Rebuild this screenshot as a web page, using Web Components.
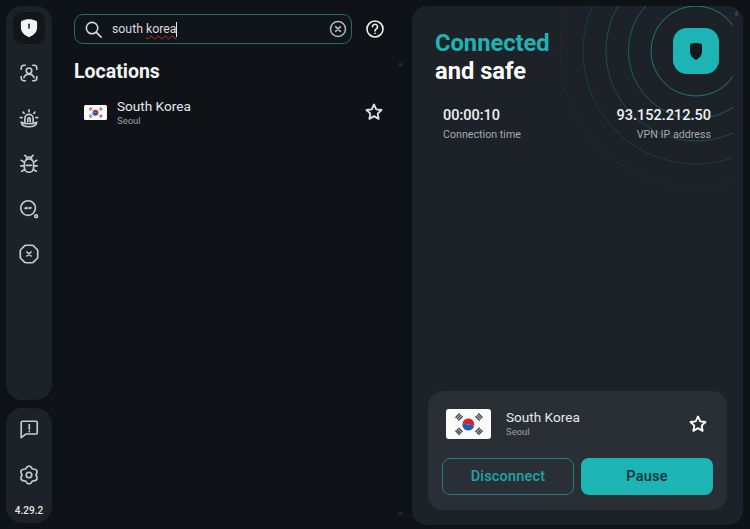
<!DOCTYPE html>
<html>
<head>
<meta charset="utf-8">
<title>VPN</title>
<style>
	html, body { margin: 0; height: 100%; background: #0f1318; overflow: hidden; }
	body { font-family: Roboto, "Liberation Sans", sans-serif; color: #fff; }
	vpn-app { width: 750px; height: 529px; }
</style>
</head>
<body>
<vpn-app></vpn-app>
<script>
(function(){
	'use strict';

	const ICONS = {
		shield: '<path d="M12 2.500c2.500 0 6 .8 7.500 1.500.8.400 1.300 1 1.300 2v5.500c0 5-3.500 8.500-8.800 10.500C6.700 20 3.200 16.500 3.200 11.500V6c0-1 .5-1.600 1.300-2C6 3.300 9.500 2.500 12 2.500z" fill="#f2f3f4" stroke="none"/><rect x="11.100" y="7" width="1.800" height="6" rx=".9" fill="#20262c" stroke="none"/>',
		face: '<path d="M3.500 8V6.500a3 3 0 0 1 3-3H8M16 3.500h1.500a3 3 0 0 1 3 3V8M20.500 16v1.500a3 3 0 0 1-3 3H16M8 20.500H6.500a3 3 0 0 1-3-3V16"/><circle cx="12" cy="9.500" r="3"/><path d="M6.500 17c1-2.700 3-3.700 5.500-3.700s4.500 1 5.500 3.700"/>',
		alarm: '<path d="M7.500 15.500v-4a4.500 4.500 0 0 1 9 0v4"/><path d="M10.700 15v-3a1.300 1.300 0 0 1 2.600 0v3"/><path d="M3.500 15.500c.5 3.500 3 5 8.500 5s8-1.500 8.500-5c-2 1.200-4.500 1.700-8.500 1.700s-6.500-.5-8.500-1.700z"/><path d="M12 2v2M5.500 4.500l1.300 1.500M18.500 4.500L17.200 6M2.500 10.500h2M19.500 10.500h2"/>',
		bug: '<rect x="7" y="6.500" width="10" height="14.500" rx="5"/><path d="M9 7.500a3 3 0 0 1 6 0M9.500 13.500h5M7 10L3.500 8M17 10l3.500-2M7 14H3M17 14h4M7.500 18l-3.500 2M16.500 18l3.500 2M9 4L7.500 2.500M15 4l1.500-1.500"/>',
		search: '<circle cx="11" cy="11" r="8"/><path d="M7.800 11.500c.8-1.300 1.600-1.300 2.200 0M12 10.500c.6 1.300 1.400 1.300 2.200 0"/><circle cx="19.800" cy="19.800" r="1.500"/>',
		blocked: '<path d="M8.500 2.500h7c.6 0 1 .2 1.400.6l4 4c.4.400.6.800.6 1.400v7c0 .6-.2 1-.6 1.400l-4 4c-.4.400-.8.600-1.400.6h-7c-.6 0-1-.2-1.400-.6l-4-4c-.4-.4-.6-.8-.6-1.400v-7c0-.6.2-1 .6-1.400l4-4c.4-.4.800-.6 1.400-.6z"/><path d="M9.800 9.800l4.400 4.400M14.200 9.800l-4.400 4.400"/>',
		feedback: '<path d="M3.500 5a1.500 1.500 0 0 1 1.500-1.500h14.500a1.500 1.500 0 0 1 1.500 1.500v11a1.500 1.500 0 0 1-1.500 1.500H8.500L3.500 21.500z"/><path d="M12.300 7.200v5M12.300 14.500v.5"/>',
		gear: '<path d="M8.200 5.420Q12-1 15.800 5.420 23.260 5.500 19.600 12 23.260 18.500 15.800 18.580 12 25 8.200 18.580.74 18.500 4.400 12 .74 5.500 8.200 5.420z"/><circle cx="12" cy="12" r="3"/>'
	};

	const FLAG = `<svg viewBox="0 0 45 30" width="100%" height="100%" preserveAspectRatio="none" aria-hidden="true">
		<rect width="45" height="30" rx="3" fill="#fbfbfb"/>
		<path d="M16.300 15.500a6 6 0 0 1 12 0z" fill="#d8232f" transform="rotate(10 22.300 15.500)"/>
		<path d="M16.300 15.500a6 6 0 0 0 12 0z" fill="#1f5fae" transform="rotate(10 22.300 15.500)"/>
		<g stroke="#3a3d40" stroke-width="1.400" fill="none">
			<path d="M-3 -2H3M-3 0H3M-3 2H3" transform="translate(13 8) rotate(-45)"/>
			<path d="M-3 -2H3M-3 0H3M-3 2H3" transform="translate(33 8) rotate(45)"/>
			<path d="M-3 -2H3M-3 0H3M-3 2H3" transform="translate(13 22.300) rotate(45)"/>
			<path d="M-3 -2H3M-3 0H3M-3 2H3" transform="translate(33 22.300) rotate(-45)"/>
		</g>
	</svg>`;

	const STAR = `<svg viewBox="0 0 24 24" width="100%" height="100%" fill="none" stroke="currentColor" stroke-width="2.200" stroke-linejoin="round" aria-hidden="true"><path d="M12 3l2.700 5.800 6.300.8-4.600 4.300 1.200 6.300L12 17l-5.600 3.200 1.200-6.300L3 9.600l6.300-.8z"/></svg>`;

	function define(name, css, html, setup){
		const tmpl = document.createElement('template');
		tmpl.innerHTML = `<style>${css}</style>${html}`;
		window.customElements.define(name, class extends HTMLElement {
			constructor(){
				super();
				this.attachShadow({mode: 'open'}).appendChild(tmpl.content.cloneNode(true));
			}
			connectedCallback(){
				if(setup) setup(this, this.shadowRoot);
			}
		});
	}

	define('nav-icon', `
		:host { display: flex; width: 32px; height: 32px; align-items: center; justify-content: center; border-radius: 9px; color: #c9ccce; }
		:host([active]) { background: #13171c; }
		svg { width: 22px; height: 22px; fill: none; stroke: currentColor; stroke-width: 1.800; stroke-linecap: round; stroke-linejoin: round; }
	`, `<svg viewBox="0 0 24 24"></svg>`, (el, root) => {
		root.querySelector('svg').innerHTML = ICONS[el.getAttribute('name')];
	});

	define('side-bar', `
		:host { display: flex; flex-direction: column; gap: 8px; width: 46px; height: 517px; }
		.top, .bottom { background: #1d2228; border-radius: 16px; display: flex; flex-direction: column; align-items: center; }
		.top { flex: 1; padding-top: 6px; gap: 13.300px; box-sizing: border-box; }
		.bottom { height: 115px; box-sizing: border-box; padding-top: 5px; gap: 14px; }
		.ver { font-size: 10px; font-weight: 500; color: #e4e6e8; }
	`, `
		<div class="top">
			<nav-icon name="shield" active></nav-icon>
			<nav-icon name="face"></nav-icon>
			<nav-icon name="alarm"></nav-icon>
			<nav-icon name="bug"></nav-icon>
			<nav-icon name="search"></nav-icon>
			<nav-icon name="blocked"></nav-icon>
		</div>
		<div class="bottom">
			<nav-icon name="feedback"></nav-icon>
			<nav-icon name="gear"></nav-icon>
			<div class="ver">4.29.2</div>
		</div>
	`);

	define('search-bar', `
		:host { display: flex; align-items: center; gap: 13px; }
		.box { box-sizing: border-box; width: 278px; height: 30px; border: 1px solid #1d6f6f; border-radius: 9px; background: #10151a; display: flex; align-items: center; padding: 0 4px 0 9px; color: #d9dbdd; }
		.mag { width: 19px; height: 19px; flex: none; }
		.text { font-size: 12.300px; margin-left: 9px; flex: 1; display: flex; align-items: center; }
		.bad { text-decoration: underline wavy #c0272d 1px; text-underline-offset: 2px; margin-left: 3px; }
		.caret { width: 1px; height: 15px; background: #e6e8ea; }
		.clear { width: 18px; height: 18px; flex: none; }
		.help { width: 20px; height: 20px; flex: none; }
	`, `
		<div class="box">
			<svg class="mag" viewBox="0 0 20 20" fill="none" stroke="currentColor" stroke-width="1.600" stroke-linecap="round"><circle cx="8.500" cy="8.500" r="6"/><path d="M13 13l5 5"/></svg>
			<div class="text"><span>south</span><span class="bad">korea</span><span class="caret"></span></div>
			<svg class="clear" viewBox="0 0 18 18" fill="none" stroke="#b5b8bb" stroke-width="1.500" stroke-linecap="round"><circle cx="9" cy="9" r="7.500"/><path d="M6.800 6.800l4.400 4.400M11.200 6.800l-4.400 4.400" stroke-width="1.800"/></svg>
		</div>
		<svg class="help" viewBox="0 0 20 20" fill="none" stroke="#f0f1f2" stroke-width="1.600" stroke-linecap="round"><circle cx="10" cy="10" r="8"/><path d="M7.500 7.800a2.500 2.500 0 1 1 3.800 2.100c-.9.600-1.300 1-1.300 2"/><path d="M10 14.300v.2"/></svg>
	`);

	define('location-row', `
		:host { display: flex; align-items: center; height: 40px; padding: 0 28px 0 10px; }
		.flag { width: 23px; height: 15px; flex: none; margin-top: 1px; }
		.names { margin-left: 10px; flex: 1; }
		.name { font-size: 13.600px; line-height: 17px; color: #e6e8ea; }
		.city { font-size: 9.500px; line-height: 12px; color: #9a9ea2; }
		.star { width: 20px; height: 20px; color: #dfe1e3; }
	`, `
		<div class="flag">${FLAG}</div>
		<div class="names"><div class="name"><slot name="name"></slot></div><div class="city"><slot name="city"></slot></div></div>
		<div class="star">${STAR}</div>
	`);

	define('locations-pane', `
		:host { display: block; width: 338px; box-sizing: border-box; padding: 8px 0 0 0; position: relative; }
		h2 { font-size: 19.500px; font-weight: 700; line-height: 22px; margin: 17px 0 9px; color: #f4f5f6; }
		.tick { position: absolute; left: 324px; width: 5px; height: 3px; background: #23282e; border-radius: 2px; }
	`, `
		<search-bar></search-bar>
		<h2>Locations</h2>
		<location-row><span slot="name">South Korea</span><span slot="city">Seoul</span></location-row>
		<div class="tick" style="top:57px"></div>
		<div class="tick" style="top:506px"></div>
	`);

	define('radar-rings', `
		:host { position: absolute; left: 121px; top: 0; width: 200px; height: 200px; overflow: hidden; display: block; }
		svg { display: block; }
	`, `
		<svg width="200" height="200" viewBox="0 0 200 200" fill="none" stroke="#1eb6b6">
			<circle cx="163" cy="45" r="45" opacity=".6"/>
			<circle cx="163" cy="45" r="67.500" opacity=".42"/>
			<circle cx="163" cy="45" r="90" opacity=".3"/>
			<circle cx="163" cy="45" r="113" opacity=".18"/>
			<circle cx="163" cy="45" r="136" opacity=".06"/>
		</svg>
	`);

	define('stat-block', `
		:host { display: block; }
		:host([right]) { text-align: right; }
		.val { font-size: 14.500px; font-weight: 500; line-height: 18px; color: #eef0f1; }
		.lab { font-size: 10.700px; line-height: 14px; color: #a6a9ad; margin-top: 3px; }
	`, `<div class="val"><slot name="val"></slot></div><div class="lab"><slot name="lab"></slot></div>`);

	define('current-card', `
		:host { display: block; background: #2a2f35; border-radius: 15px; height: 119px; box-sizing: border-box; padding: 18px 14px 0; }
		.row { display: flex; align-items: center; height: 30px; padding-right: 5px; }
		.flag { width: 45px; height: 30px; margin-left: 4px; flex: none; }
		.names { margin-left: 15px; flex: 1; padding-bottom: 2px; }
		.name { font-size: 13.600px; line-height: 17px; color: #e6e8ea; }
		.city { font-size: 9.500px; line-height: 12px; color: #9a9ea2; }
		.star { width: 20px; height: 20px; color: #fff; }
		.btns { display: grid; grid-template-columns: 132px 132px; gap: 7px; margin-top: 19px; }
		.btn { box-sizing: border-box; height: 37px; border-radius: 8px; display: flex; align-items: center; justify-content: center; font-size: 14.500px; font-weight: 500; letter-spacing: .2px; }
		.line { border: 1px solid #1f7e80; color: #1fa5a7; }
		.fill { background: #1cb4b4; color: #143038; }
	`, `
		<div class="row">
			<div class="flag">${FLAG}</div>
			<div class="names"><div class="name">South Korea</div><div class="city">Seoul</div></div>
			<div class="star">${STAR}</div>
		</div>
		<div class="btns"><div class="btn line">Disconnect</div><div class="btn fill">Pause</div></div>
	`);

	define('status-panel', `
		:host { display: flex; flex-direction: column; position: relative; width: 331px; height: 519px; box-sizing: border-box; background: #1d2228; border-radius: 15px; padding: 23px 16px 15px; overflow: hidden; }
		h1 { margin: 0; font-size: 23.700px; line-height: 28px; font-weight: 700; position: relative; padding-left: 7px; }
		h1 .on { color: #1fb4b4; display: block; }
		h1 .safe { color: #fff; display: block; }
		.stats { display: flex; justify-content: space-between; padding: 0 16px 0 15px; margin-top: 22px; position: relative; }
		.tile { position: absolute; left: 261px; top: 22px; width: 46px; height: 46px; background: #1cb4b4; border-radius: 14px; display: flex; align-items: center; justify-content: center; }
		.tile svg { width: 12px; height: 17px; }
		.spacer { flex: 1; }
		.tick { position: absolute; right: 5px; top: 5px; width: 3px; height: 5px; background: #3a4046; border-radius: 2px; }
	`, `
		<radar-rings></radar-rings>
		<div class="tile"><svg viewBox="0 0 12 17"><path d="M6 0c2 0 3.800.3 5 .7.700.2 1 .7 1 1.300v6.500c0 3.700-2.300 6.500-6 8.500-3.700-2-6-4.800-6-8.500V2c0-.6.300-1.100 1-1.300C2.200.3 4 0 6 0z" fill="#12181e"/></svg></div>
		<h1><span class="on">Connected</span><span class="safe">and safe</span></h1>
		<div class="stats">
			<stat-block><span slot="val">00:00:10</span><span slot="lab">Connection time</span></stat-block>
			<stat-block right><span slot="val">93.152.212.50</span><span slot="lab">VPN IP address</span></stat-block>
		</div>
		<div class="spacer"></div>
		<current-card></current-card>
		<div class="tick"></div>
	`);

	define('vpn-app', `
		:host { display: flex; box-sizing: border-box; padding: 6px 7px 4px 6px; color: #fff; font-family: Roboto, "Liberation Sans", sans-serif; }
		locations-pane { margin-left: 22px; }
	`, `
		<side-bar></side-bar>
		<locations-pane></locations-pane>
		<status-panel></status-panel>
	`);

}());
</script>
</body>
</html>
